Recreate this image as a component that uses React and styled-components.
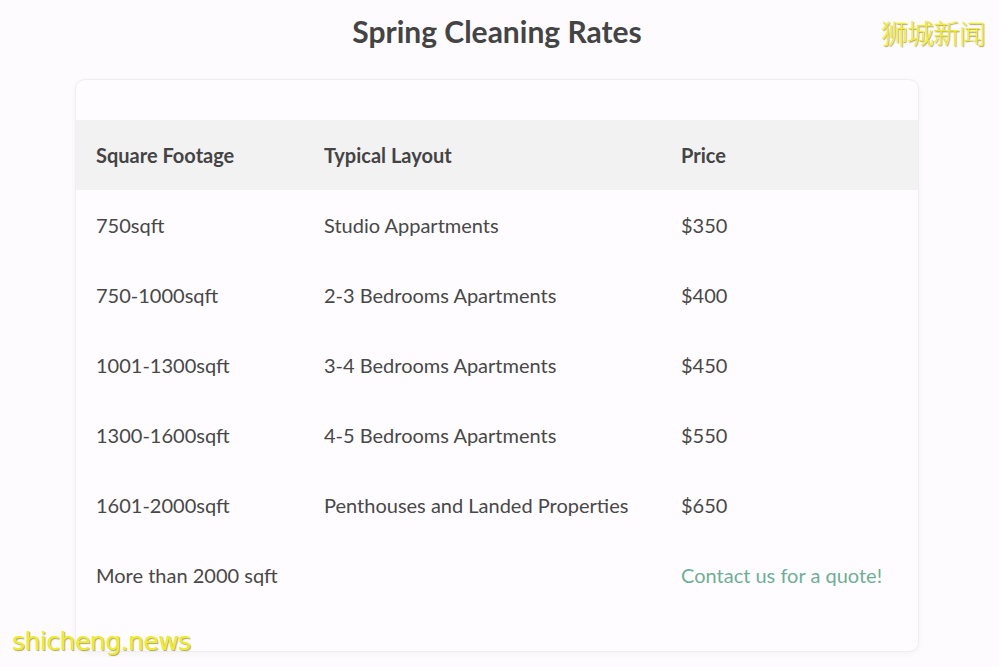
import React from "react";
import styled, { createGlobalStyle } from "styled-components";

const Global = createGlobalStyle`
  html, body { margin: 0; padding: 0; background: #fdfbfd; }
  body { font-family: Lato, "Noto Sans", sans-serif; color: #454545; }
`;

const Page = styled.div`
  position: relative;
  width: 999px;
  height: 667px;
  overflow: hidden;
  padding-top: 11px;
  box-sizing: border-box;
`;

const Title = styled.h1`
  margin: 0;
  text-align: center;
  font-size: 30px;
  font-weight: 700;
  line-height: 40px;
  color: #444;
  padding-right: 5px;
`;

const Card = styled.div`
  margin: 28px 0 0 75px;
  width: 844px;
  box-sizing: border-box;
  background: #fefcfe;
  border: 1px solid #efedef;
  border-radius: 10px;
  box-shadow: 0 2px 6px rgba(0, 0, 0, 0.04);
  padding: 40px 0 41px;
`;

const Table = styled.table`
  width: 100%;
  border-collapse: collapse;
  table-layout: fixed;
`;

const Col = styled.col`
  width: ${(p) => p.$w}px;
`;

const HeadRow = styled.tr`
  background: #f3f2f3;
`;

const Th = styled.th`
  height: 70px;
  box-sizing: border-box;
  padding: 0 0 1px 20px;
  text-align: left;
  font-size: 20px;
  font-weight: 700;
  color: #444;
`;

const Td = styled.td`
  height: 70px;
  box-sizing: border-box;
  padding: 0 0 0 20px;
  font-size: 20px;
  font-weight: 400;
  color: ${(p) => (p.$link ? "#6fae96" : "#484848")};
  white-space: nowrap;
`;

const MarkCn = styled.div`
  position: absolute;
  right: 14px;
  top: 13px;
  font-family: "Noto Sans CJK SC", sans-serif;
  font-size: 27px;
  font-weight: 300;
  color: #f2ee2a;
  letter-spacing: -1px;
  text-shadow: 1px 1px 1px rgba(120, 110, 0, 0.6);
`;

const MarkEn = styled.div`
  position: absolute;
  left: 12px;
  top: 627px;
  font-family: "DejaVu Sans", sans-serif;
  font-size: 25px;
  color: #efec2c;
  letter-spacing: -0.5px;
  text-shadow: 1px 1px 1px rgba(120, 110, 0, 0.6);
`;

const rows = [
  ["750sqft", "Studio Appartments", "$350"],
  ["750-1000sqft", "2-3 Bedrooms Apartments", "$400"],
  ["1001-1300sqft", "3-4 Bedrooms Apartments", "$450"],
  ["1300-1600sqft", "4-5 Bedrooms Apartments", "$550"],
  ["1601-2000sqft", "Penthouses and Landed Properties", "$650"],
];

export default function App() {
  return (
    <>
      <Global />
      <Page>
        <Title>Spring Cleaning Rates</Title>
        <Card>
          <Table>
            <colgroup>
              <Col $w={228} />
              <Col $w={357} />
              <Col $w={257} />
            </colgroup>
            <thead>
              <HeadRow>
                <Th>Square Footage</Th>
                <Th>Typical Layout</Th>
                <Th>Price</Th>
              </HeadRow>
            </thead>
            <tbody>
              {rows.map((r) => (
                <tr key={r[0]}>
                  <Td>{r[0]}</Td>
                  <Td>{r[1]}</Td>
                  <Td>{r[2]}</Td>
                </tr>
              ))}
              <tr>
                <Td>More than 2000 sqft</Td>
                <Td></Td>
                <Td $link>Contact us for a quote!</Td>
              </tr>
            </tbody>
          </Table>
        </Card>
        <MarkCn>狮城新闻</MarkCn>
        <MarkEn>shicheng.news</MarkEn>
      </Page>
    </>
  );
}
